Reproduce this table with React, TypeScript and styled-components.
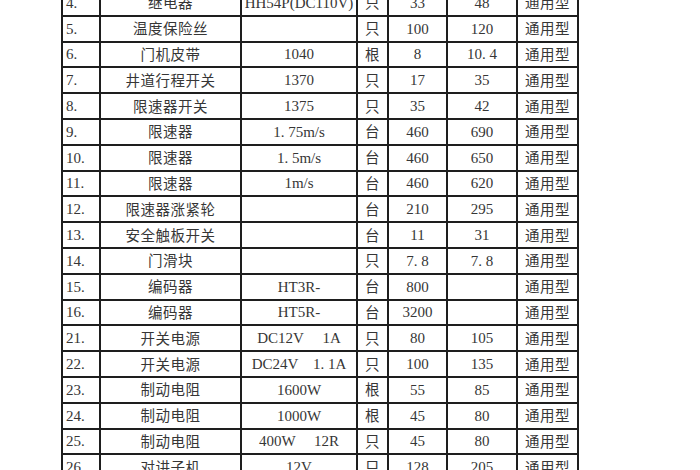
import React from "react";
import styled, { createGlobalStyle } from "styled-components";

const GlobalStyle = createGlobalStyle`
    html, body {
        margin: 0;
        padding: 0;
        background: #ffffff;
        overflow: hidden;
    }
`;

const Page = styled.div`
    width: 700px;
    height: 470px;
    overflow: hidden;
    padding-left: 61px;
    box-sizing: border-box;
`;

const Sheet = styled.table`
    margin-top: -11px;
    border-collapse: collapse;
    table-layout: fixed;
    width: 518px;
    font-family: "Liberation Serif", "Noto Sans CJK SC", serif;
    font-size: 15px;
    color: #363636;
`;

const Row = styled.tr`
    height: 25.8px;
`;

const Cell = styled.td<{ $align?: "left" | "center" }>`
    border: 2px solid #1e1e1e;
    padding: 0 0 0 ${(p) => (p.$align === "left" ? "3px" : "0")};
    text-align: ${(p) => p.$align || "center"};
    white-space: pre;
    overflow: hidden;
    line-height: 20px;
    vertical-align: middle;
`;

const Cjk = styled.span`
    font-family: "Noto Sans CJK SC", sans-serif;
    font-size: 14.5px;
    letter-spacing: 0.5px;
`;

type Item = [string, string, string, string, string, string];

const items: Item[] = [
    ["4.", "继电器", "HH54P(DC110V)", "只", "33", "48"],
    ["5.", "温度保险丝", "", "只", "100", "120"],
    ["6.", "门机皮带", "1040", "根", "8", "10. 4"],
    ["7.", "井道行程开关", "1370", "只", "17", "35"],
    ["8.", "限速器开关", "1375", "只", "35", "42"],
    ["9.", "限速器", "1. 75m/s", "台", "460", "690"],
    ["10.", "限速器", "1. 5m/s", "台", "460", "650"],
    ["11.", "限速器", "1m/s", "台", "460", "620"],
    ["12.", "限速器涨紧轮", "", "台", "210", "295"],
    ["13.", "安全触板开关", "", "台", "11", "31"],
    ["14.", "门滑块", "", "只", "7. 8", "7. 8"],
    ["15.", "编码器", "HT3R-", "台", "800", ""],
    ["16.", "编码器", "HT5R-", "台", "3200", ""],
    ["21.", "开关电源", "DC12V     1A", "只", "80", "105"],
    ["22.", "开关电源", "DC24V    1. 1A", "只", "100", "135"],
    ["23.", "制动电阻", "1600W", "根", "55", "85"],
    ["24.", "制动电阻", "1000W", "根", "45", "80"],
    ["25.", "制动电阻", "400W     12R", "只", "45", "80"],
    ["26.", "对讲子机", "12V", "只", "128", "205"],
];

const widths = [38, 141, 116, 31, 59, 70, 61];

function App() {
    return (
        <Page>
            <GlobalStyle />
            <Sheet>
                <colgroup>
                    {widths.map((w, i) => (
                        <col key={i} style={{ width: w }} />
                    ))}
                </colgroup>
                <tbody>
                    {items.map((it) => (
                        <Row key={it[0]}>
                            <Cell $align="left">{it[0]}</Cell>
                            <Cell>
                                <Cjk>{it[1]}</Cjk>
                            </Cell>
                            <Cell>{it[2]}</Cell>
                            <Cell>
                                <Cjk>{it[3]}</Cjk>
                            </Cell>
                            <Cell>{it[4]}</Cell>
                            <Cell>{it[5]}</Cell>
                            <Cell>
                                <Cjk>通用型</Cjk>
                            </Cell>
                        </Row>
                    ))}
                </tbody>
            </Sheet>
        </Page>
    );
}

export default App;
